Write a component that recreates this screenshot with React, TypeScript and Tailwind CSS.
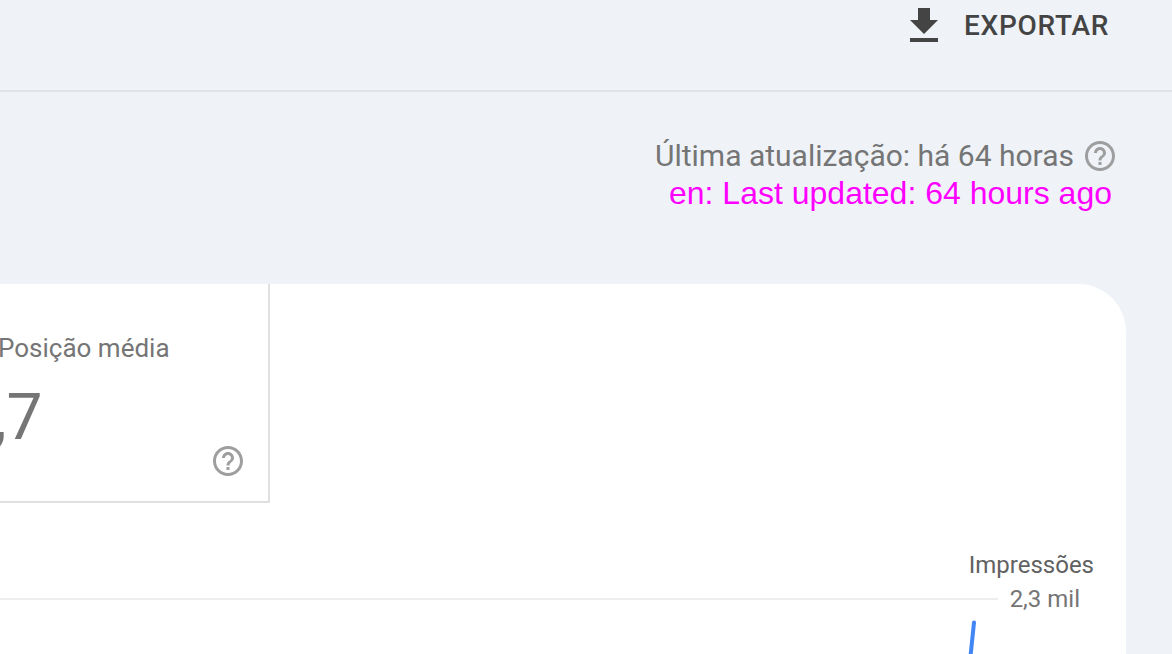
import React from "react";
import { MdFileDownload, MdHelpOutline } from "react-icons/md";

function HelpButton({ label }: { label: string }) {
  return (
    <button type="button" aria-label={label} className="block shrink-0 text-[#9e9e9e]">
      <MdHelpOutline className="size-9" />
    </button>
  );
}

function TopBar() {
  return (
    <header className="flex h-[92px] items-start justify-end border-b-2 border-[#e0e3e6] pt-[2px] pr-[63px]">
      <button type="button" className="flex items-center gap-4 text-[28px] leading-8 font-medium text-[#444]">
        <MdFileDownload className="size-12" />
        <span className="tracking-wide">EXPORTAR</span>
      </button>
    </header>
  );
}

function LastUpdate() {
  return (
    <div className="flex h-48 flex-col items-end pt-[46px] pr-[54px]">
      <div className="flex items-center gap-2 text-[30px] leading-9 text-[#757575]">
        <span>Última atualização: há 64 horas</span>
        <HelpButton label="Ajuda sobre a última atualização" />
      </div>
      <p className="pr-[6px] font-['Liberation_Sans',Arial,sans-serif] text-[32px] leading-[38px] text-[#ff00ff]">
        en: Last updated: 64 hours ago
      </p>
    </div>
  );
}

function PositionCard() {
  return (
    <section className="flex h-[219px] w-[270px] flex-col border-r-2 border-b-2 border-[#e0e0e0] text-[#757575]">
      <h2 className="-ml-[2px] pt-12 text-[26px] leading-8">Posição média</h2>
      <div className="-ml-[6px] pt-4 text-[64px] leading-[76px]">,7</div>
      <div className="-mt-[13px] flex justify-end pr-[22px]">
        <HelpButton label="Ajuda sobre a posição média" />
      </div>
    </section>
  );
}

function ImpressionsChart() {
  return (
    <section className="pt-12 text-[24px] leading-7">
      <h2 className="pr-8 text-right text-[#616161]">Impressões</h2>
      <div className="flex items-center gap-3 pt-[6px] pr-[46px] text-[#757575]">
        <div className="h-[2px] grow bg-[#eeeeee]" />
        <span>2,3 mil</span>
      </div>
      <div className="flex justify-end pr-[148px]">
        <svg viewBox="0 0 12 48" className="h-12 w-3 overflow-visible" fill="none" aria-hidden="true">
          <path d="M8 9.5L4 48" stroke="#4285f4" strokeWidth="4" strokeLinecap="round" />
        </svg>
      </div>
    </section>
  );
}

export default function App() {
  return (
    <div className="h-screen overflow-hidden bg-[#eff3f8] font-[Roboto,sans-serif]">
      <TopBar />
      <LastUpdate />
      <main className="mr-[46px] min-h-screen overflow-hidden rounded-tr-[48px] bg-white">
        <PositionCard />
        <ImpressionsChart />
      </main>
    </div>
  );
}
